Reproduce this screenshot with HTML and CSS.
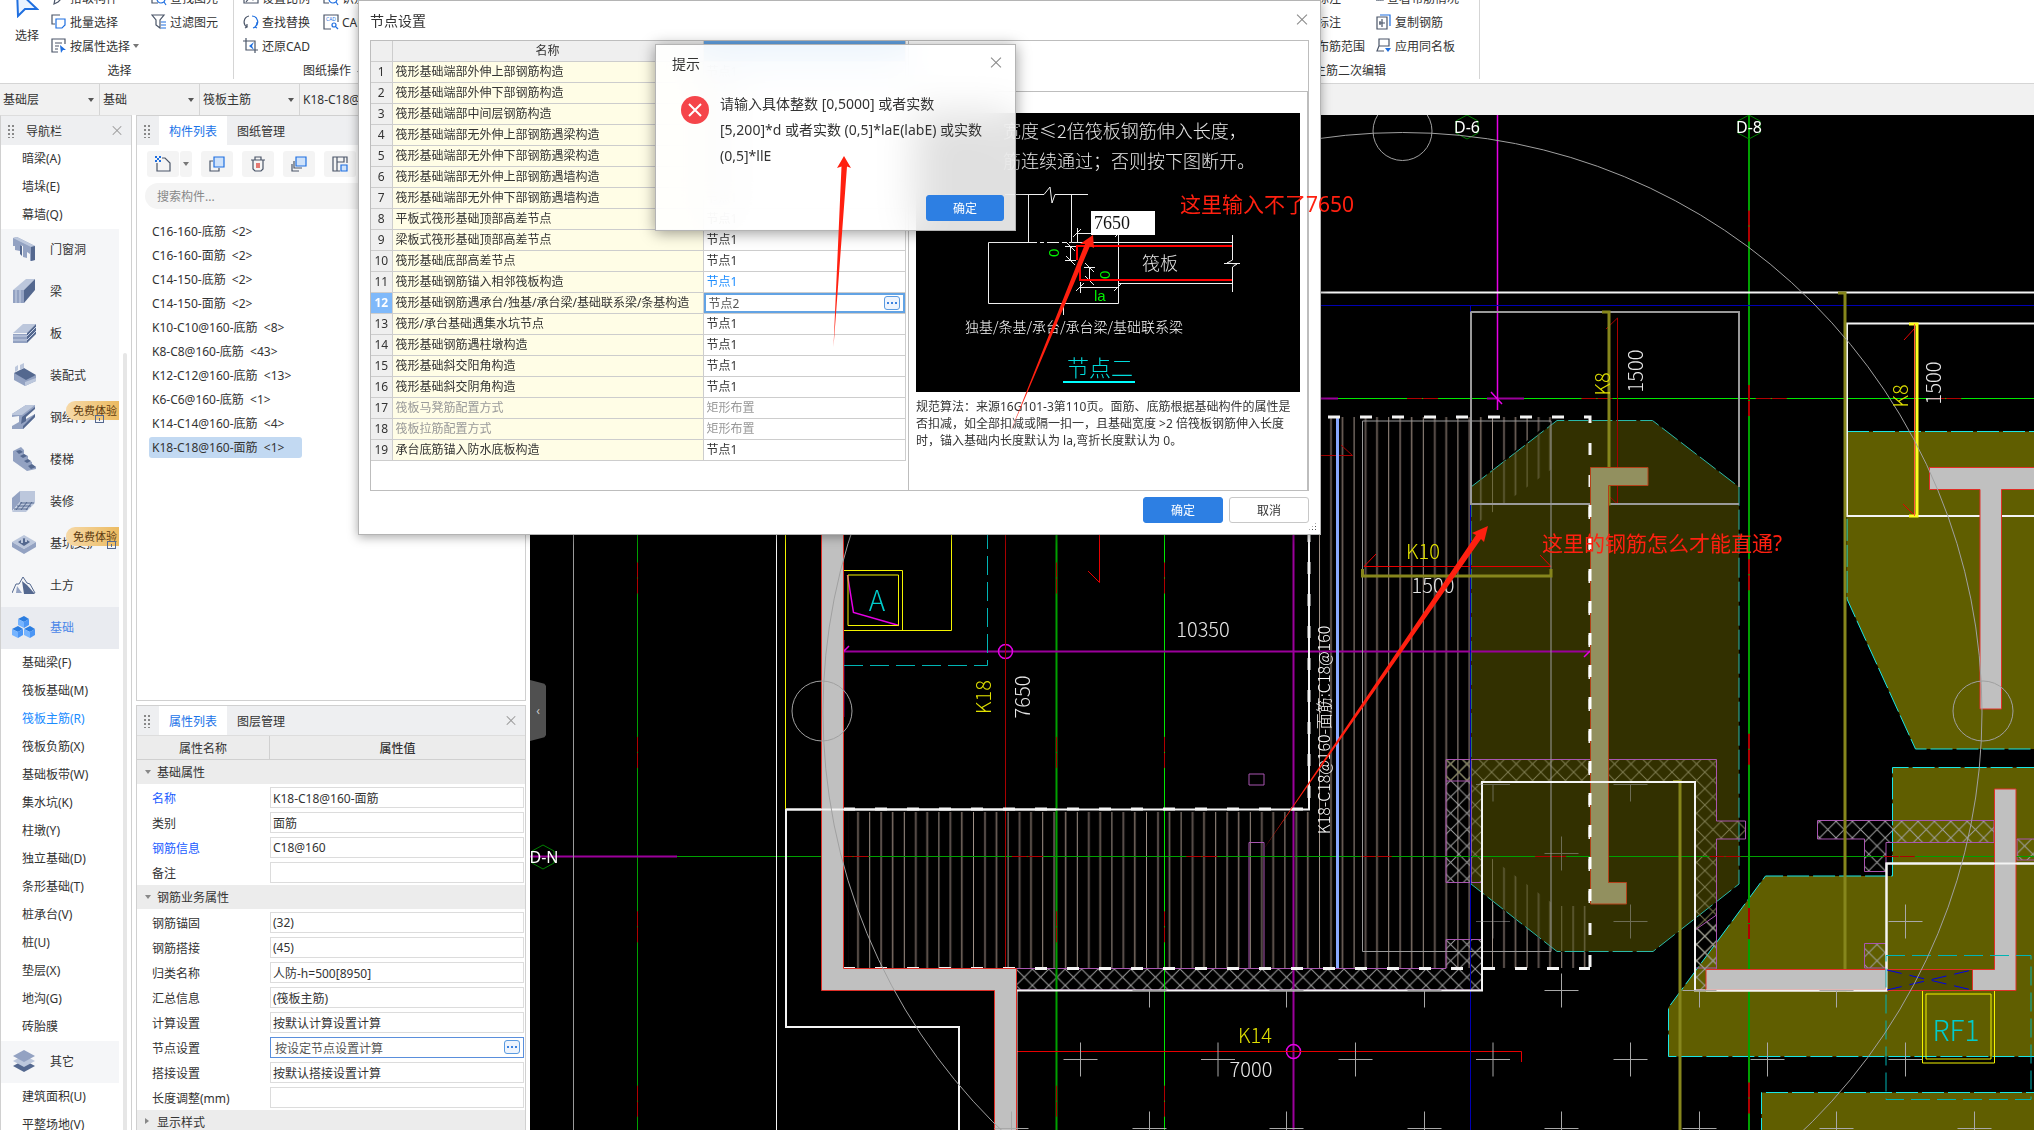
FILE: index.html
```html
<!DOCTYPE html>
<html lang="zh-CN">
<head>
    <meta charset="UTF-8">
    <title>节点设置</title>
    <link rel="stylesheet" href="styles.css">
</head>
<body>

    <!-- 功能区 -->
    <header class="ribbon">
        <div class="ribbon-group group-select">
            <button class="big-tool">
                <svg width="24" height="28" viewBox="0 0 24 28"><path d="M2 0 L3 26 L10 19 L22 19 Z" fill="#eaf3ff" stroke="#1f6fe0" stroke-width="2"/></svg>
                选择
            </button>
            <div class="tool-col">
                <button class="tool"><svg width="16" height="16" viewBox="0 0 16 16"><path d="M3 14 L4 9 L11 2 L14 5 L7 12 Z"/></svg>拾取构件</button>
                <button class="tool"><svg width="16" height="16" viewBox="0 0 16 16"><path d="M9 1H1V10H4"/><path class="b" d="M5 5H14V11L11 14H5Z"/></svg>批量选择</button>
                <button class="tool"><svg width="16" height="16" viewBox="0 0 16 16"><path d="M7 14H1V1H14V6M4 5H11M4 8H8M4 11H7"/><path class="bf" d="M9 7L15 12L12 12L10 15Z"/></svg>按属性选择<i class="caret"></i></button>
            </div>
            <div class="tool-col">
                <button class="tool"><svg width="16" height="16" viewBox="0 0 16 16"><path d="M1 3V13H7M4 5V10"/><circle class="b" cx="10" cy="9" r="4"/><path class="b" d="M13 12L15 15"/></svg>查找图元</button>
                <button class="tool"><svg width="16" height="16" viewBox="0 0 16 16"><path d="M1 1H13L9 6V14L5 11V6Z"/><path class="b" d="M10 8H15M10 11H15M10 14H15"/></svg>过滤图元</button>
            </div>
            <span class="group-name">选择</span>
        </div>
        <div class="ribbon-group group-drawing">
            <div class="tool-col">
                <button class="tool"><svg width="16" height="16" viewBox="0 0 16 16"><path d="M1 3H15V13H1ZM3 12L7 7L10 10L13 7"/></svg>设置比例</button>
                <button class="tool"><svg width="16" height="16" viewBox="0 0 16 16"><path d="M6 2A6 6 0 0 0 4 13L2 14M4 13V10"/><path class="b" d="M9 2A6 6 0 0 1 12 13L14 14M10 14A6 6 0 0 0 14 8"/></svg>查找替换</button>
                <button class="tool"><svg width="16" height="16" viewBox="0 0 16 16"><path d="M3 0V12H15M0 3H12V15"/><path class="bf" d="M11 4L6 8L11 12L9 8Z"/></svg>还原CAD</button>
            </div>
            <div class="tool-col">
                <button class="tool"><svg width="16" height="16" viewBox="0 0 16 16"><path d="M1 2V13H6"/><circle class="b" cx="10" cy="9" r="4"/><path class="b" d="M13 12L15 15"/></svg>识别</button>
                <button class="tool"><svg width="16" height="16" viewBox="0 0 16 16"><path d="M8 15H1V1H15V8"/><text x="3" y="7">CAD</text><circle class="b" cx="11" cy="11" r="2"/><path class="b" d="M13 13L15 15"/></svg>CAD</button>
            </div>
            <span class="group-name">图纸操作<i class="caret"></i></span>
        </div>
        <div class="ribbon-group group-edit">
            <div class="tool-col">
                <button class="tool">原位标注</button>
                <button class="tool">钢筋标注</button>
                <button class="tool">查看布筋范围</button>
            </div>
            <div class="tool-col">
                <button class="tool"><svg width="16" height="16" viewBox="0 0 16 16"><path d="M1 13L6 4M5 13L10 4M9 13L14 4M1 13H15V3H3Z"/></svg>查看布筋情况</button>
                <button class="tool"><svg width="16" height="16" viewBox="0 0 16 16"><path d="M1 3H11V15H1ZM6 5V13M3 9H9M4 7V11"/><path class="b" d="M4 1H14V12"/></svg>复制钢筋</button>
                <button class="tool"><svg width="16" height="16" viewBox="0 0 16 16"><path d="M3 1H13V8H3ZM3 4V8L1 13H8"/><path class="bf" d="M9 10H15L12 14Z"/></svg>应用同名板</button>
            </div>
            <span class="group-name">板主筋二次编辑</span>
        </div>
    </header>

    <!-- 楼层 / 构件 筛选 -->
    <div class="filter-bar">
        <label class="filter"><select aria-label="楼层"><option>基础层</option></select></label>
        <label class="filter"><select aria-label="构件大类"><option>基础</option></select></label>
        <label class="filter"><select aria-label="构件类型"><option>筏板主筋</option></select></label>
        <label class="filter"><select aria-label="构件"><option>K18-C18@160-面筋</option></select></label>
    </div>

    <main class="workspace">

        <!-- 导航栏 -->
        <nav class="nav-panel">
            <div class="panel-head">
                <span class="grip"></span>
                <span class="panel-title">导航栏</span>
                <button class="close" aria-label="关闭导航栏"></button>
            </div>
            <div class="nav-body">
                <div class="nav-list">
                    <a href="#" class="sub">暗梁(A)</a>
                    <a href="#" class="sub">墙垛(E)</a>
                    <a href="#" class="sub">幕墙(Q)</a>
                    <a href="#" class="cat"><svg viewBox="0 0 24 24"><path class="m" d="M1 1L5 0L23 9V23L18 24V17L15 15V21L11 20V9L8 8V14L3 13V9L1 9Z"/><path class="l" d="M1 1L5 0L23 9L19 10Z"/><path class="d" d="M19 10L23 9V23L19 24ZM8 8L10 9V19L8 17Z"/></svg>门窗洞</a>
                    <a href="#" class="cat"><svg viewBox="0 0 24 24"><path class="l" d="M1 11L14 0H23L12 11Z"/><path class="m" d="M1 11H12V24H1Z"/><path class="d" d="M12 11L23 0V11L12 24Z"/><path class="s" d="M4 11V24M8 11V24"/></svg>梁</a>
                    <a href="#" class="cat"><svg viewBox="0 0 24 24"><path class="l" d="M1 12L11 3H24L15 12Z"/><path class="m" d="M1 13H15V22H1Z"/><path class="d" d="M15 12L24 3V13L15 22Z"/><path class="s" d="M1 15H15L24 6M1 19H15L24 10"/></svg>板</a>
                    <a href="#" class="cat"><svg viewBox="0 0 24 24"><path class="m" d="M2 10L14 15L24 12V18L13 23L2 17Z"/><path class="d" d="M2 10L12 5L24 12L14 17Z"/><path class="l" d="M3 4L6 2V7L3 9ZM8 2L12 0V5L8 7ZM13 19L24 15V18L13 23Z"/></svg>装配式</a>
                    <a href="#" class="cat"><svg viewBox="0 0 24 24"><path class="m" d="M0 9L14 0H23V3L14 10V14L23 9V12L11 24H0V21L7 17V11L0 12Z"/><path class="l" d="M0 9L14 0H23L10 10H0Z"/><path class="d" d="M10 12L23 2V4L14 12V16L9 19ZM11 21L23 9V12L11 24Z"/></svg>钢结构<span class="badge">免费体验</span><i class="lock"></i></a>
                    <a href="#" class="cat"><svg viewBox="0 0 24 24"><path class="m" d="M1 4L9 0L12 3V7L16 9V13L20 15V18L24 20V22L15 24L1 14Z"/><path class="d" d="M4 4L8 3L11 5L7 7ZM8 9L12 7L15 9L11 11ZM12 14L16 12L19 14L15 16ZM16 19L20 17L24 20L19 22Z"/></svg>楼梯</a>
                    <a href="#" class="cat"><svg viewBox="0 0 24 24"><path class="m" d="M0 9L8 2V13L0 22Z"/><path class="l" d="M8 2H23V14L14 23H0L8 13Z"/><path class="k" d="M8 14H22M5 17H19M2 20H16M10 13L4 21M15 13L9 21M20 13L14 21"/></svg>装修</a>
                    <a href="#" class="cat"><svg viewBox="0 0 24 24"><path class="l" d="M0 11L12 4L24 11L12 18Z"/><path class="m" d="M0 11L12 18V23L0 16ZM12 18L24 11V16L12 23Z"/><path class="d" d="M6 11L12 7L18 11L12 15Z"/><path class="l" d="M9 8H11V12H9ZM13 8H15V11H13Z"/></svg>基坑支护<span class="badge">免费体验</span><i class="lock far"></i></a>
                    <a href="#" class="cat"><svg viewBox="0 0 24 24"><path class="k" d="M0 20L4 11L7 11L11 4L15 10L18 11L23 20"/><path class="d" d="M10 8L15 12L23 21H12Z"/><path class="m" d="M5 13L10 20H4Z"/></svg>土方</a>
                    <a href="#" class="cat current"><svg viewBox="0 0 24 24"><g id="cube"><path fill="#2b7de0" d="M6 4L12 1L17 4L12 7Z"/><path fill="#76b4ff" d="M6 4L12 7V13L6 10Z"/><path fill="#4b96f5" d="M12 7L17 4V10L12 13Z"/></g><use href="#cube" x="-6" y="10"/><use href="#cube" x="6" y="10"/></svg>基础</a>
                    <a href="#" class="sub">基础梁(F)</a>
                    <a href="#" class="sub">筏板基础(M)</a>
                    <a href="#" class="sub active">筏板主筋(R)</a>
                    <a href="#" class="sub">筏板负筋(X)</a>
                    <a href="#" class="sub">基础板带(W)</a>
                    <a href="#" class="sub">集水坑(K)</a>
                    <a href="#" class="sub">柱墩(Y)</a>
                    <a href="#" class="sub">独立基础(D)</a>
                    <a href="#" class="sub">条形基础(T)</a>
                    <a href="#" class="sub">桩承台(V)</a>
                    <a href="#" class="sub">桩(U)</a>
                    <a href="#" class="sub">垫层(X)</a>
                    <a href="#" class="sub">地沟(G)</a>
                    <a href="#" class="sub">砖胎膜</a>
                    <a href="#" class="cat"><svg viewBox="0 0 24 24"><path class="d" d="M1 17L12 11L23 17L12 23Z"/><path class="l" d="M1 12L12 6L23 12L12 18Z"/><path class="m" d="M1 7L12 1L23 7L12 13Z"/></svg>其它</a>
                    <a href="#" class="sub">建筑面积(U)</a>
                    <a href="#" class="sub">平整场地(V)</a>
                </div>
                <div class="nav-scroll"></div>
            </div>
        </nav>

        <div class="side">
            <!-- 构件列表 -->
            <section class="panel components">
                <div class="panel-head">
                    <span class="grip"></span>
                    <button class="tab active">构件列表</button>
                    <button class="tab">图纸管理</button>
                </div>
                <div class="tool-row">
                    <span class="split">
                        <button aria-label="新建"><svg width="18" height="18" viewBox="0 0 18 18"><path d="M8 3H11L16 8V16H3V8"/><path class="bf" d="M1 1h2v2h-2zM5 1h2v2h-2zM3 3h2v2h-2zM1 5h2v2h-2zM5 5h2v2h-2z"/></svg></button>
                        <button class="drop" aria-label="更多"><i class="caret"></i></button>
                    </span>
                    <button aria-label="复制"><svg width="18" height="18" viewBox="0 0 18 18"><path d="M5 6H2V16H11V13"/><path class="b fill" d="M6 2H16V12H6Z"/></svg></button>
                    <button aria-label="删除"><svg width="18" height="18" viewBox="0 0 18 18"><path d="M2 5H16M4 5V14L6 16H12L14 14V5M6 5V2H12V5"/><path class="r" d="M8 8V13M10 8V13"/></svg></button>
                    <button aria-label="层间复制"><svg width="18" height="18" viewBox="0 0 18 18"><path d="M4 6V13H12M2 9V16H9"/><path class="b fill" d="M6 2H16V11H6Z"/></svg></button>
                    <button aria-label="存档"><svg width="18" height="18" viewBox="0 0 18 18"><path d="M9 16H2V2H16V8M6 2V16M6 7H13V2"/><path class="b fill" d="M10 10H16V16H10Z"/></svg></button>
                </div>
                <input class="search" type="text" placeholder="搜索构件..." aria-label="搜索构件">
                <ul class="component-list">
                    <li>C16-160-底筋 &nbsp;&lt;2&gt;</li>
                    <li>C16-160-面筋 &nbsp;&lt;2&gt;</li>
                    <li>C14-150-底筋 &nbsp;&lt;2&gt;</li>
                    <li>C14-150-面筋 &nbsp;&lt;2&gt;</li>
                    <li>K10-C10@160-底筋 &nbsp;&lt;8&gt;</li>
                    <li>K8-C8@160-底筋 &nbsp;&lt;43&gt;</li>
                    <li>K12-C12@160-底筋 &nbsp;&lt;13&gt;</li>
                    <li>K6-C6@160-底筋 &nbsp;&lt;1&gt;</li>
                    <li>K14-C14@160-底筋 &nbsp;&lt;4&gt;</li>
                    <li class="selected">K18-C18@160-面筋 &nbsp;&lt;1&gt;</li>
                </ul>
            </section>

            <!-- 属性列表 -->
            <section class="panel props">
                <div class="panel-head">
                    <span class="grip"></span>
                    <button class="tab active">属性列表</button>
                    <button class="tab">图层管理</button>
                    <button class="close" aria-label="关闭属性列表"></button>
                </div>
                <div class="prop-head"><span>属性名称</span><strong>属性值</strong></div>
                <div class="prop-group">基础属性</div>
                <div class="prop key"><label for="p1">名称</label><input id="p1" value="K18-C18@160-面筋"></div>
                <div class="prop"><label for="p2">类别</label><input id="p2" value="面筋"></div>
                <div class="prop key"><label for="p3">钢筋信息</label><input id="p3" value="C18@160"></div>
                <div class="prop"><label for="p4">备注</label><input id="p4" value=""></div>
                <div class="prop-group">钢筋业务属性</div>
                <div class="prop"><label for="p5">钢筋锚固</label><input id="p5" value="(32)"></div>
                <div class="prop"><label for="p6">钢筋搭接</label><input id="p6" value="(45)"></div>
                <div class="prop"><label for="p7">归类名称</label><input id="p7" value="人防-h=500[8950]"></div>
                <div class="prop"><label for="p8">汇总信息</label><input id="p8" value="(筏板主筋)"></div>
                <div class="prop"><label for="p9">计算设置</label><input id="p9" value="按默认计算设置计算"></div>
                <div class="prop editing"><label for="p10">节点设置</label><input id="p10" value="按设定节点设置计算"><button class="dots" aria-label="选择节点设置"></button></div>
                <div class="prop"><label for="p11">搭接设置</label><input id="p11" value="按默认搭接设置计算"></div>
                <div class="prop"><label for="p12">长度调整(mm)</label><input id="p12" value=""></div>
                <div class="prop-group closed">显示样式</div>
            </section>
        </div>

        <!-- 绘图区 -->
        <section class="canvas">
            <svg class="cad" viewBox="530 115 1504 1015" preserveAspectRatio="xMinYMin slice">
                <defs>
                    <!-- 钢筋线 -->
                    <pattern id="bars" x="1319" y="0" width="34.6" height="40" patternUnits="userSpaceOnUse">
                        <rect x="0" width="1" height="40" fill="#a09288"/>
                        <rect x="11" width="2" height="40" fill="#5a504b"/>
                        <rect x="22.6" width="1.6" height="40" fill="#75685f"/>
                    </pattern>
                    <pattern id="barsDim" x="1319" y="0" width="34.6" height="40" patternUnits="userSpaceOnUse">
                        <rect x="0" width="1" height="40" fill="#6e6a40"/>
                        <rect x="11" width="2" height="40" fill="#57532c"/>
                        <rect x="22.6" width="1.6" height="40" fill="#625e38"/>
                    </pattern>
                    <!-- 剪力墙填充 -->
                    <pattern id="wall" x="1016" y="969" width="16.4" height="16.4" patternUnits="userSpaceOnUse">
                        <path d="M0 0L16.4 16.4M16.4 0L0 16.4" stroke="#a0a0a0" fill="none"/>
                    </pattern>
                    <pattern id="wallDim" x="1016" y="969" width="16.4" height="16.4" patternUnits="userSpaceOnUse">
                        <path d="M0 0L16.4 16.4M16.4 0L0 16.4" stroke="#7d7b50" fill="none"/>
                    </pattern>
                    <path id="plus" d="M-17 0H17M0 -17V17"/>
                    <path id="tick" d="M-17 0H17M0 0V17"/>
                    <path id="hex" d="M0 -12L11 -6V6L0 12L-11 6V-6Z"/>
                </defs>

                <!-- 承台 -->
                <g class="cap">
                    <path d="M1847 431.500H2040V749H1915.500L1847 599Z"/>
                    <path d="M1668.500 1056.500V1007.500L1765.500 876H1892.500V767.500H2040V1056.500Z"/>
                    <path d="M1761.500 1140V1092.500H2040V1140Z"/>
                </g>
                <path class="cap-dim" d="M1471 487L1557 420.500H1652.500L1739 487V884L1653 951.500H1557L1471 884Z"/>

                <!-- 筏板主筋 -->
                <path fill="url(#bars)" d="M848 812H1315V417H1471V968H848Z"/>
                <path fill="url(#bars)" d="M1471 417H1556L1471 487Z"/>
                <path fill="url(#barsDim)" d="M1471 487L1556 420V466L1476 524H1471Z"/>
                <path fill="url(#barsDim)" d="M1487 855L1556 906H1590V951H1557L1487 896Z"/>
                <path fill="url(#bars)" d="M1487 897L1557 952H1590V968H1487Z"/>

                <!-- 墙填充 -->
                <g class="wall">
                    <path fill="url(#wall)" d="M1016 968.500H1446V939.500H1482V990H1016Z"/>
                    <path fill="url(#wall)" d="M1471 759.500H1446V882.500H1471Z"/>
                    <path fill="url(#wallDim)" d="M1446 759.500H1716.500V821H1745.500V839H1716.500V968H1695V781.500H1482V882.500H1471V781H1446"/>
                    <path fill="url(#wall)" d="M1817.500 820.500H1994V842.500H1886V871.500H1864.500V839H1817.500Z"/>
                    <path fill="url(#wall)" d="M2017 839H2040V860H2017ZM1864.500 943.500H1886V968H1864.500ZM1695 930L1716.500 915V968L1706 990H1695Z"/>
                    <path d="M1249 774H1264V785H1249ZM1249 968V842.500H1264V968"/>
                </g>

                <!-- 轴线 -->
                <g class="axis">
                    <path d="M637.500 530V1130M657 856.500H821M844 856.500H2034"/>
                    <path d="M1056.500 530V1130M1749 115V1130" stroke-width="2"/>
                    <path class="bright" d="M1164.500 530V1130M1338 398.500H2034"/>
                </g>
                <g class="axis-red">
                    <path d="M637.500 562.500V1130M1056.500 562.500V1130M1164.500 562.500V1130"/>
                    <path d="M1749 210.500V1130" stroke-width="2"/>
                    <path d="M1407 398.500H2034M837.500 856.500H1990"/>
                </g>
                <g class="hexes"><use href="#hex" x="1467" y="127"/><use href="#hex" x="1749" y="127"/><use href="#hex" x="543" y="857"/></g>

                <!-- 尺寸线 -->
                <g class="purple">
                    <path d="M530 856.500H677M832 651.500H1590M1321 398.500H1338M1487 398.500H1524"/>
                    <path d="M1293.500 530V1130"/>
                    <path class="hot" d="M1497.500 115V410M1491 392L1502 404M843.500 640V717M838 657L849 646M1584 657L1590 651"/>
                    <circle cx="1005.500" cy="651.500" r="7"/>
                    <circle cx="1293.500" cy="1051.500" r="7"/>
                    <path class="hot" d="M847.500 575L853.500 612.500L899 625.500"/>
                </g>
                <g class="red">
                    <path d="M1005.500 530V968M1321 455.500H1352.500L1341 445M1617.500 318V504L1608 495M1617.500 318L1606 329"/>
                    <path class="hot" d="M1099.500 530V582.500L1088 571M1016 1051.500H1521.500V1062M1364 566.500H1551M1364 566.500L1376 554M1551 566.500L1540 555M1904 340L1915 328M1903 504L1915 516"/>
                </g>

                <!-- 蓝线 -->
                <g class="blue">
                    <path d="M1321 305.500H2034M1470.500 305V1130"/>
                    <path class="sel" d="M1337.500 417V968"/>
                </g>

                <!-- 灰线 -->
                <g class="gray">
                    <path d="M573.500 530V1130M1362.500 421V951.500H1551V421Z"/>
                    <path stroke-width="2" d="M1470.500 312H1739V487M1739 504H1471V312"/>
                </g>
                <g class="white">
                    <path stroke-width="1" d="M776.500 530V1130"/>
                    <path d="M1309 530V809.500H786V1027H959V1130"/>
                    <path d="M1321 292.500H2034M2040 323.500H1847V516H2040"/>
                    <path d="M1016.500 1130V990.500H1482V782H1695V990.500H1886.500V863.500H2040"/>
                    <path class="dash" d="M843 809H1309M1309 530V809M843 968.500H1590M1328 417H1590V968"/>
                </g>

                <!-- 黄线 -->
                <g class="yellow">
                    <path d="M785.500 530V809M843.500 570.500H902.500V630M848 575H898.500V625.500H848ZM951.500 530V630.500H843.500"/>
                    <path d="M1922.500 991V1063H1994.500V991M1926 994H1991V1059H1926Z"/>
                    <path class="bar" d="M1602 312H1609V504H1602M1838 293H1845V990H1838M1362.500 569V576H1551V569M1673 781.500H1680V1130"/>
                    <path class="hot" d="M1909 324H1917V516H1909"/>
                </g>
                <path d="M1914.500 324V516" stroke="#ff5a3c"/>

                <!-- 柱 墙 -->
                <g class="solid">
                    <path d="M821.500 520H843.500V968.500H1016.500V1140H994.500V990.500H821.500Z"/>
                    <path d="M1929.500 467.500H2040V489.500H2001.500V709H1980V489.500H1929.500Z"/>
                    <path d="M1706 969.500H1886V990H1706ZM1972.500 969.500H1994.500V789H2016V990.500H1972.500Z"/>
                    <path class="dim" d="M1590.500 467.500H1648V485.500H1608.500V882.500H1626.500V904H1590.500Z"/>
                    <path class="door" d="M1886 969.500H1972.500V990.500H1886Z"/>
                </g>
                <path class="white-line" d="M786 809.500H1056M1706 990.500H1886.500V863.500H2040M1482 782H1695"/>
                <path d="M1590 505V904" stroke="#fff" stroke-width="3" stroke-dasharray="12 20"/>
                <path d="M1887 970L1972 990M1887 990L1972 970" stroke="#0000e6" stroke-dasharray="15 8"/>
                <g class="cyan">
                    <path d="M987.500 530V665.500H843.500"/>
                    <path d="M1886 955.500H2031V1099.500H1886Z"/>
                </g>

                <!-- 十字 -->
                <g class="marks">
                    <use href="#plus" x="1080.500" y="1059.500"/><use href="#plus" x="1218" y="1059.500"/><use href="#plus" x="1355.500" y="1059.500"/><use href="#plus" x="1493" y="1059.500"/><use href="#plus" x="1630.500" y="1059.500"/><use href="#plus" x="1767.500" y="1059.500"/><use href="#plus" x="1905.500" y="1059.500"/>
                    <use href="#plus" x="1011.500" y="1128.500"/><use href="#plus" x="1149.500" y="1128.500"/><use href="#plus" x="1286.500" y="1128.500"/><use href="#plus" x="1424.500" y="1128.500"/><use href="#plus" x="1561.500" y="1128.500"/><use href="#plus" x="1699.500" y="1128.500"/><use href="#plus" x="1836.500" y="1128.500"/><use href="#plus" x="1974.500" y="1128.500"/>
                    <use href="#tick" x="1149.500" y="990.500"/><use href="#tick" x="1286.500" y="990.500"/><use href="#tick" x="1424.500" y="990.500"/><use href="#plus" x="1561.500" y="990.500"/><use href="#tick" x="1699.500" y="990.500"/><use href="#tick" x="1836.500" y="990.500"/>
                    <use href="#plus" x="1905.500" y="921.500"/>
                    <g opacity="0.5"><use href="#plus" x="1493" y="921.500"/><use href="#plus" x="1630.500" y="921.500"/><use href="#plus" x="1561.500" y="853.500"/><use href="#tick" x="1493" y="784.500"/><use href="#tick" x="1630.500" y="784.500"/></g>
                </g>

                <!-- 圆 -->
                <g class="circles">
                    <circle cx="1402.500" cy="712" r="579.500"/>
                    <circle cx="1402.500" cy="131" r="29.500"/>
                    <circle cx="822" cy="711" r="30"/>
                    <circle cx="1983" cy="711" r="30"/>
                </g>

                <!-- 标注文字 -->
                <g class="cad-text">
                    <text x="1467" y="133" class="ax">D-6</text>
                    <text x="1749" y="133" class="ax">D-8</text>
                    <text x="544" y="863" class="ax">D-N</text>
                    <text x="1203" y="637">10350</text>
                    <text x="1433" y="593">1500</text>
                    <text x="1251" y="1077">7000</text>
                    <text transform="translate(1030 697) rotate(-90)">7650</text>
                    <text transform="translate(1643 371) rotate(-90)">1500</text>
                    <text transform="translate(1941 383) rotate(-90)">1500</text>
                    <text class="code" x="1423" y="559">K10</text>
                    <text class="code" x="1255" y="1043">K14</text>
                    <text class="code" transform="translate(991 697) rotate(-90)">K18</text>
                    <text class="code" transform="translate(1610 384) rotate(-90)">K8</text>
                    <text class="code" transform="translate(1908 396) rotate(-90)">K8</text>
                    <text class="tag" x="877" y="611">A</text>
                    <text class="tag" x="1956" y="1041">RF1</text>
                    <text class="bar-name" transform="translate(1330 730) rotate(-90)">K18-C18@160-面筋:C18@160</text>
                </g>
            </svg>
            <button class="collapse" aria-label="收起侧栏">‹</button>
        </section>
    </main>

    <!-- 节点设置窗口 -->
    <div class="dialog" role="dialog" aria-label="节点设置">
        <div class="dialog-head">
            <h2>节点设置</h2>
            <button class="close big" aria-label="关闭"></button>
        </div>
        <div class="dialog-body">
            <div class="node-table">
                <table>
                    <colgroup><col class="c-no"><col class="c-name"><col class="c-val"></colgroup>
                    <thead><tr><th></th><th>名称</th><th class="sel"></th></tr></thead>
                    <tbody>
                        <tr><th>1</th><td>筏形基础端部外伸上部钢筋构造</td><td>节点1</td></tr>
                        <tr><th>2</th><td>筏形基础端部外伸下部钢筋构造</td><td>节点1</td></tr>
                        <tr><th>3</th><td>筏形基础端部中间层钢筋构造</td><td>节点1</td></tr>
                        <tr><th>4</th><td>筏形基础端部无外伸上部钢筋遇梁构造</td><td>节点1</td></tr>
                        <tr><th>5</th><td>筏形基础端部无外伸下部钢筋遇梁构造</td><td>节点1</td></tr>
                        <tr><th>6</th><td>筏形基础端部无外伸上部钢筋遇墙构造</td><td>节点1</td></tr>
                        <tr><th>7</th><td>筏形基础端部无外伸下部钢筋遇墙构造</td><td>节点1</td></tr>
                        <tr><th>8</th><td>平板式筏形基础顶部高差节点</td><td>节点1</td></tr>
                        <tr><th>9</th><td>梁板式筏形基础顶部高差节点</td><td>节点1</td></tr>
                        <tr><th>10</th><td>筏形基础底部高差节点</td><td>节点1</td></tr>
                        <tr><th>11</th><td>筏形基础钢筋锚入相邻筏板构造</td><td class="changed">节点1</td></tr>
                        <tr class="current"><th>12</th><td>筏形基础钢筋遇承台/独基/承台梁/基础联系梁/条基构造</td><td class="edit"><div class="cell"><input value="节点2" aria-label="节点"><button class="dots" aria-label="选择节点"></button></div></td></tr>
                        <tr><th>13</th><td>筏形/承台基础遇集水坑节点</td><td>节点1</td></tr>
                        <tr><th>14</th><td>筏形基础钢筋遇柱墩构造</td><td>节点1</td></tr>
                        <tr><th>15</th><td>筏形基础斜交阳角构造</td><td>节点1</td></tr>
                        <tr><th>16</th><td>筏形基础斜交阴角构造</td><td>节点1</td></tr>
                        <tr class="off"><th>17</th><td>筏板马凳筋配置方式</td><td>矩形布置</td></tr>
                        <tr class="off"><th>18</th><td>筏板拉筋配置方式</td><td>矩形布置</td></tr>
                        <tr><th>19</th><td>承台底筋锚入防水底板构造</td><td>节点1</td></tr>
                    </tbody>
                </table>
            </div>
            <div class="node-side">
                <div class="node-top"></div>
                <div class="node-view">
                    <div class="figure">
                        <svg width="384" height="279" viewBox="916 113 384 279">
                            <g class="note">
                                <text x="1003" y="138">宽度≤2倍筏板钢筋伸入长度，</text>
                                <text x="1003" y="168">筋连续通过；否则按下图断开。</text>
                                <text x="1142" y="270">筏板</text>
                            </g>
                            <g class="lines">
                                <path d="M1005 194.500H1044L1050 187L1052 203L1055 194.500H1088"/>
                                <path d="M1028.500 194.500V242.500M1071.500 194.500V242.500H1232"/>
                                <path d="M1037 242.500H988.500V303.500H1118.500V235"/>
                                <path d="M1040 242.500H1071" stroke-dasharray="4 3 12 3"/>
                                <path d="M1232.500 235V260L1227 263L1237 264L1232.500 267V292M1118.500 283.500H1232M1224 263.500H1240"/>
                                <path d="M1077.500 228V242M1073 237L1081 229M1077 233.500H1119M1115 237L1123 229"/>
                                <path d="M1070.500 246V260M1065 246.500H1076M1065 260.500H1076M1066 242L1075 251M1066 256L1075 265"/>
                                <path d="M1089.500 267V281M1084 267.500H1095M1084 280.500H1095M1085 263L1094 272M1085 276L1094 285"/>
                                <path d="M1080.500 282V293M1076 291L1084 283M1080 287.500H1118M1114 291L1122 283M1063.500 300V315"/>
                            </g>
                            <path class="rebar" d="M1232 246H1077V260M1232 280H1080V265"/>
                            <g class="dims">
                                <text transform="translate(1059 257) rotate(-90)">0</text>
                                <text transform="translate(1110 279) rotate(-90)">0</text>
                                <text x="1094" y="301">la</text>
                            </g>
                            <text class="kind" x="965" y="332">独基/条基/承台/承台梁/基础联系梁</text>
                            <text class="node-name" x="1067" y="376">节点二</text>
                            <path d="M1063 382H1135" stroke="#00ffff" stroke-width="2"/>
                        </svg>
                        <input class="dim-input" value="7650" aria-label="弯折长度">
                    </div>
                    <p class="rule">规范算法：来源16G101-3第110页。面筋、底筋根据基础构件的属性是否扣减，如全部扣减或隔一扣一，且基础宽度 &gt;2 倍筏板钢筋伸入长度时，锚入基础内长度默认为 la,弯折长度默认为 0。</p>
                </div>
            </div>
        </div>
        <div class="dialog-foot">
            <button class="btn primary">确定</button>
            <button class="btn">取消</button>
            <i class="resize"></i>
        </div>
    </div>

    <!-- 提示 -->
    <div class="alert" role="alertdialog" aria-label="提示">
        <div class="alert-head">
            <h2>提示</h2>
            <button class="close big" aria-label="关闭"></button>
        </div>
        <div class="alert-body">
            <svg width="28" height="28" viewBox="0 0 28 28"><circle cx="14" cy="14" r="14" fill="#f5454a"/><path d="M8 8L20 20M20 8L8 20" stroke="#fff" stroke-width="2"/></svg>
            <p>请输入具体整数 [0,5000] 或者实数<br>[5,200]*d 或者实数 (0,5]*laE(labE) 或实数<br>(0,5]*llE</p>
        </div>
        <div class="alert-foot"><button class="btn primary">确定</button></div>
    </div>

    <!-- 批注 -->
    <svg class="marker" viewBox="0 0 2034 1130" preserveAspectRatio="xMinYMin slice">
        <path d="M844 156L851 168L847 166.500L833.500 347L841.500 166.500L837 168Z"/>
        <path d="M1093 235L1094 248L1090 246L1010 433L1085 244L1080 244Z"/>
        <path d="M1488 526L1484 542L1481 539L1263 850L1476 535L1472 533Z"/>
        <text x="1180" y="212">这里输入不了7650</text>
        <text x="1542" y="551">这里的钢筋怎么才能直通?</text>
    </svg>

</body>
</html>
```
FILE: styles.css
```css
* {
    box-sizing: border-box;
    margin: 0;
    padding: 0;
}

body {
    font-family: "Noto Sans", "Noto Sans CJK SC", sans-serif;
    font-size: 12px;
    color: #333;
    background-color: #fff;
    display: flex;
    flex-direction: column;
    height: 100vh;
    overflow: hidden;
    position: relative;
}

button,
input,
select {
    font: inherit;
    color: inherit;
    border: none;
    background: none;
    outline: none;
}

a {
    color: inherit;
    text-decoration: none;
}

.caret {
    display: inline-block;
    border: 3px solid transparent;
    border-top: 4px solid #777;
    border-bottom: none;
}

/* 功能区 */
.ribbon {
    height: 84px;
    flex: none;
    display: flex;
    border-bottom: 1px solid #d5d5d5;
    overflow: hidden;
}

.ribbon-group {
    position: relative;
    display: flex;
    height: 79px;
    border-right: 1px solid #d5d5d5;
    flex: none;
}

.group-select {
    width: 234px;
    padding-left: 14px;
}

.group-drawing {
    width: 1036px;
    padding-left: 8px;
    border-right: none;
}

.group-edit {
    width: 210px;
    padding-left: 23px;
}

.group-name {
    position: absolute;
    left: 0;
    right: 0;
    bottom: 0;
    line-height: 16px;
    text-align: center;
}

.group-select .group-name {
    padding-left: 6px;
}

.group-drawing .group-name {
    right: auto;
    left: 69px;
}

.group-edit .group-name {
    right: auto;
    left: 32px;
}

.group-name .caret {
    margin-left: 6px;
}

.big-tool {
    display: flex;
    flex-direction: column;
    align-items: center;
    width: 28px;
    margin-top: -10px;
    height: 56px;
    gap: 9px;
    line-height: 18px;
}

.tool-col {
    display: flex;
    flex-direction: column;
    margin-top: -14px;
    margin-left: 11px;
    width: 88px;
    white-space: nowrap;
}

.group-select .tool-col + .tool-col {
    margin-left: 12px;
}

.group-drawing .tool-col {
    margin-left: 1px;
    width: 80px;
}

.group-drawing .tool-col + .tool-col {
    margin-left: 0;
}

.group-edit .tool-col {
    margin-left: 0;
    width: 83px;
}

.tool {
    display: flex;
    align-items: center;
    gap: 3px;
    height: 24px;
}

.tool svg,
.tool-row svg {
    fill: none;
    stroke: #4a5568;
    stroke-width: 1.2;
}

.tool svg text {
    font-size: 5px;
    fill: #1f6fe0;
    stroke: none;
}

.b {
    stroke: #1f6fe0;
}

.bf {
    fill: #1f6fe0;
    stroke: none;
}

.b.fill {
    fill: #cfe2fa;
}

.r {
    stroke: #d9261c;
}

/* 筛选栏 */
.filter-bar {
    height: 31px;
    flex: none;
    display: flex;
    background-color: #f1f1f1;
}

.filter {
    position: relative;
    width: 100px;
    border-right: 1px solid #d5d5d5;
}

.filter::after {
    content: "";
    position: absolute;
    right: 5px;
    top: 14px;
    border: 3px solid transparent;
    border-top: 4px solid #555;
    border-bottom: none;
}

.filter select {
    appearance: none;
    width: 100%;
    height: 100%;
    padding-left: 3px;
}

/* 主区域 */
.workspace {
    flex: 1;
    min-height: 0;
    display: flex;
}

.panel-head {
    display: flex;
    align-items: center;
    height: 29px;
    flex: none;
    background-color: #eeeff1;
    padding-left: 6px;
}

.grip {
    width: 7px;
    height: 14px;
    background-image: radial-gradient(circle, #888 1px, transparent 1px);
    background-size: 4px 4px;
}

.close {
    position: relative;
    margin-left: auto;
    margin-right: 8px;
    width: 12px;
    height: 12px;
}

.close::before,
.close::after {
    content: "";
    position: absolute;
    left: 0;
    top: 5px;
    width: 12px;
    height: 1px;
    background-color: #999;
    transform: rotate(45deg);
}

.close::after {
    transform: rotate(-45deg);
}

.close.big::before,
.close.big::after {
    left: -1px;
    width: 14px;
    background-color: #888;
}

.nav-panel {
    width: 132px;
    flex: none;
    display: flex;
    flex-direction: column;
    border: 1px solid #d0d0d0;
    border-top-color: #ddd;
    border-bottom: none;
    margin-right: 4px;
    overflow: hidden;
}

.panel-title {
    margin-left: 12px;
}

.nav-body {
    flex: 1;
    min-height: 0;
    display: flex;
}

.nav-list {
    width: 118px;
    overflow: hidden;
}

.nav-scroll {
    width: 4px;
    margin-left: 4px;
    margin-top: 208px;
    background-color: #e6e6e6;
    border-radius: 2px 2px 0 0;
}

.sub {
    display: block;
    height: 28px;
    line-height: 28px;
    padding-left: 21px;
}

.sub.active {
    color: #1a8cff;
}

.cat {
    position: relative;
    display: flex;
    align-items: center;
    gap: 14px;
    height: 42px;
    padding-left: 11px;
    padding-bottom: 2px;
    background-color: #f5f6f8;
    white-space: nowrap;
}

.cat.current {
    background-color: #e9ebf0;
    color: #4a86e8;
}

.cat svg {
    width: 24px;
    height: 24px;
    flex: none;
}

.cat .l { fill: #bcc7dc; }
.cat .m { fill: #93a2c2; }
.cat .d { fill: #54688f; }
.cat .s { fill: none; stroke: #c9d3e6; }
.cat .k { fill: none; stroke: #54688f; }

.badge {
    position: absolute;
    right: 0;
    top: 4px;
    height: 19px;
    line-height: 19px;
    padding: 0 2px 0 7px;
    font-size: 11px;
    color: #5c3a10;
    background: linear-gradient(90deg, #f6d9a8, #ecbb62);
    border-radius: 9px 0 0 9px;
}

.lock {
    position: absolute;
    left: 94px;
    top: 18px;
    width: 9px;
    height: 8px;
    border: 1px solid #54688f;
}

.lock::after {
    content: "";
    position: absolute;
    left: 3px;
    top: 2px;
    width: 1px;
    height: 3px;
    background-color: #54688f;
}

.lock.far {
    left: 106px;
}

.side {
    width: 390px;
    flex: none;
    display: flex;
    flex-direction: column;
    gap: 4px;
    margin-right: 4px;
}

.panel {
    border: 1px solid #d0d0d0;
    display: flex;
    flex-direction: column;
}

.components {
    height: 586px;
    flex: none;
}

.props {
    flex: 1;
    min-height: 0;
    border-bottom: none;
    overflow: hidden;
}

.panel .grip {
    margin-right: 9px;
}

.tab {
    height: 29px;
    padding: 0 10px;
}

.tab.active {
    background-color: #fff;
    color: #1a73e8;
}

.tool-row {
    display: flex;
    gap: 9px;
    padding: 6px 10px;
}

.tool-row button {
    width: 32px;
    height: 26px;
    display: flex;
    align-items: center;
    justify-content: center;
    background-color: #f4f4f4;
    border-radius: 3px;
}

.split {
    display: flex;
    gap: 1px;
}

.tool-row .drop {
    width: 12px;
}

.search {
    margin-left: 8px;
    height: 26px;
    flex: none;
    padding-left: 12px;
    border-radius: 13px;
    background-color: #f4f4f4;
}

.search::placeholder {
    color: #888;
}

.component-list {
    list-style: none;
    padding: 12px;
    display: flex;
    flex-direction: column;
    align-items: flex-start;
    gap: 3px;
}

.component-list li {
    height: 21px;
    line-height: 21px;
    padding: 0 18px 0 3px;
    border-radius: 3px;
}

.component-list .selected {
    background-color: #c2d9f2;
}

/* 属性 */
.prop-head {
    display: flex;
    height: 25px;
    flex: none;
    line-height: 25px;
    text-align: center;
    background-color: #ececec;
    border-top: 1px solid #ddd;
    border-bottom: 1px solid #d0d0d0;
}

.prop-head span {
    width: 133px;
    border-right: 1px solid #d0d0d0;
}

.prop-head strong {
    flex: 1;
    font-weight: 500;
}

.prop-group {
    position: relative;
    height: 25px;
    flex: none;
    line-height: 26px;
    padding-left: 20px;
    background-color: #ececec;
    border-bottom: 1px solid #fff;
}

.prop-group::before {
    content: "";
    position: absolute;
    left: 8px;
    top: 10px;
    border: 3px solid transparent;
    border-top: 4px solid #888;
    border-bottom: none;
}

.prop-group.closed::before {
    top: 8px;
    border: 3px solid transparent;
    border-left: 4px solid #888;
    border-right: none;
}

.prop {
    position: relative;
    display: flex;
    align-items: center;
    height: 25px;
    flex: none;
    padding-right: 1px;
}

.prop label {
    width: 133px;
    padding-left: 15px;
}

.prop input {
    flex: 1;
    min-width: 0;
    height: 21px;
    padding-left: 2px;
    border: 1px solid #dcdcdc;
}

.prop.key label {
    color: #1a5cff;
}

.prop.editing input {
    border-color: #5a8fdc;
    padding-left: 4px;
    color: #555;
}

.dots {
    position: absolute;
    right: 5px;
    top: 5px;
    width: 16px;
    height: 14px;
    border: 1px solid #5a9ae0;
    border-radius: 3px;
    background: radial-gradient(circle, #3c82e0 1px, transparent 1px) center / 4px 4px no-repeat, #eef4fd;
    background-repeat: repeat-x;
    background-clip: content-box, border-box;
    padding: 0 1px;
}

/* 绘图区 */
.canvas {
    position: relative;
    flex: 1;
    min-width: 0;
    background-color: #000;
    overflow: hidden;
}

.cad {
    display: block;
    width: 100%;
    height: 100%;
    fill: none;
}

.cad .cap { fill: #605e00; stroke: #19e6e6; stroke-dasharray: 22 4; }
.cad .cap-dim { fill: #323000; stroke: #2ab8a8; stroke-dasharray: 20 4; }
.cad .wall { stroke: #a855b0; }
.cad .axis { stroke: #00a000; }
.cad .axis .bright { stroke: #00e800; }
.cad .axis-red { stroke: #b00000; stroke-dasharray: 15 1 15 143.400; }
.cad .hexes { stroke: #008000; }
.cad .purple { stroke: #9b009b; stroke-width: 2; }
.cad .purple .hot,
.cad .purple circle { stroke: #e600e6; stroke-width: 1.500; }
.cad .red { stroke: #a80000; }
.cad .red .hot { stroke: #e80000; }
.cad .blue { stroke: #0000b4; }
.cad .blue .sel { stroke: #88a8ff; stroke-width: 3; }
.cad .gray { stroke: #9a9a9a; }
.cad .white,
.cad .white-line { stroke: #f4f4f4; stroke-width: 2; }
.cad .white .dash { stroke-width: 3; stroke-dasharray: 12 20; }
.cad .yellow { stroke: #f4f400; }
.cad .yellow .bar { stroke: #86861c; stroke-width: 3; }
.cad .yellow .hot { stroke: #ffff20; stroke-width: 3; }
.cad .solid { fill: #c0c0c0; stroke: #e03028; }
.cad .solid .dim { fill: #92905f; stroke: #b44018; }
.cad .solid .door { fill: #504c00; }
.cad .cyan { stroke: #00b4b4; stroke-width: 1; stroke-dasharray: 19 7; }
.cad .marks { stroke: #a8a8a8; }
.cad .circles { stroke: #a0a0a0; }

.cad-text {
    fill: #e6e6e6;
    font-family: "Noto Sans CJK SC", sans-serif;
    font-size: 20px;
    font-weight: 300;
    text-anchor: middle;
}

.cad-text .ax {
    font-family: "Noto Sans", sans-serif;
    font-size: 16px;
    font-weight: 400;
    fill: #fff;
}

.cad-text .code {
    fill: #e0e000;
}

.cad-text .tag {
    fill: #00cccc;
    font-size: 28px;
}

.cad-text .bar-name {
    font-size: 16px;
    fill: #fff;
}

.collapse {
    position: absolute;
    left: 0;
    top: 565px;
    width: 16px;
    height: 61px;
    background-color: #505050;
    color: #ccc;
    clip-path: polygon(0 0, 90% 6%, 100% 10%, 100% 90%, 90% 94%, 0 100%);
}

/* 节点设置 */
.dialog {
    position: absolute;
    left: 358px;
    top: 0;
    width: 963px;
    background-color: #fff;
    border: 1px solid #b4b4b4;
    box-shadow: 0 2px 10px rgba(0, 0, 0, 0.35);
    padding: 0 11px;
}

h2 {
    font-size: 14px;
    font-weight: 400;
}

.dialog-head {
    display: flex;
    align-items: center;
    height: 39px;
    padding-bottom: 1px;
}

.dialog-head .close {
    margin-right: 1px;
}

.dialog-body {
    display: flex;
    height: 451px;
    border: 1px solid #bdbdbd;
}

.node-table {
    width: 538px;
    border-right: 1px solid #bdbdbd;
}

table {
    width: 534px;
    table-layout: fixed;
    border-collapse: collapse;
}

.c-no { width: 21px; }
.c-name { width: 311px; }
.c-val { width: 202px; }

tr {
    height: 21px;
}

thead tr {
    height: 20px;
}

th,
td {
    line-height: 18px;
    border: 1px solid #cdcdcd;
    border-top: none;
    font-weight: 400;
    white-space: nowrap;
    overflow: hidden;
}

th {
    background-color: #efefef;
    text-align: center;
}

th:first-child {
    border-left: none;
}

th.sel {
    background-color: #62a3e4;
}

td {
    padding-left: 3px;
}

td:nth-child(2) {
    background-color: #fffde6;
}

.changed {
    color: #1a8cff;
}

.off td {
    color: #999;
}

.current th {
    background-color: #7fb9fa;
    color: #fff;
    font-weight: 700;
}

.edit {
    padding: 0;
}

.cell {
    position: relative;
    height: 20px;
}

.cell input {
    display: block;
    width: 100%;
    height: 20px;
    border: 2px solid #62a3e4;
    padding-left: 3px;
    color: #555;
}

.cell .dots {
    top: 3px;
}

.node-side {
    flex: 1;
    display: flex;
    flex-direction: column;
}

.node-top {
    height: 50px;
}

.node-view {
    flex: 1;
    border-top: 1px solid #bdbdbd;
    border-right: 1px solid #bdbdbd;
    padding: 21px 6px 0 7px;
}

.figure {
    position: relative;
    width: 384px;
    height: 279px;
    background-color: #000;
}

.figure svg {
    display: block;
    fill: none;
}

.figure .lines { stroke: #f0f0f0; }
.figure .rebar { stroke: #f00; stroke-width: 2; }

.note {
    fill: #e6e6e6;
    font-family: "Noto Sans CJK SC", sans-serif;
    font-size: 18px;
    font-weight: 300;
}

.dims {
    fill: #00f000;
    font-family: "Liberation Sans", sans-serif;
    font-size: 15px;
}

.kind {
    fill: #fff;
    font-family: "Noto Sans CJK SC", sans-serif;
    font-size: 14px;
    font-weight: 300;
}

.node-name {
    fill: #00dcdc;
    font-family: "Noto Sans CJK SC", sans-serif;
    font-size: 22px;
    font-weight: 300;
}

.dim-input {
    position: absolute;
    left: 175px;
    top: 98px;
    width: 64px;
    height: 24px;
    padding-left: 3px;
    background-color: #fff;
    color: #111;
    font-family: "Liberation Serif", serif;
    font-size: 18px;
}

.rule {
    margin-top: 6px;
    line-height: 17px;
}

.dialog-foot {
    display: flex;
    justify-content: flex-end;
    align-items: flex-start;
    gap: 6px;
    padding-top: 6px;
    height: 43px;
}

.btn {
    width: 80px;
    height: 26px;
    border: 1px solid #c8c8c8;
    border-radius: 3px;
    background-color: #fff;
}

.btn.primary {
    background-color: #2d7fe3;
    border-color: #2d7fe3;
    color: #fff;
}

.resize {
    position: absolute;
    right: 3px;
    bottom: 3px;
    width: 9px;
    height: 9px;
    background-image: linear-gradient(#777, #777);
    background-image: radial-gradient(circle, #555 1px, transparent 1px);
    background-size: 3px 3px;
    clip-path: polygon(100% 0, 100% 100%, 0 100%);
}

/* 提示 */
.alert {
    position: absolute;
    left: 655px;
    top: 44px;
    width: 361px;
    height: 187px;
    padding: 0 11px 9px 16px;
    display: flex;
    flex-direction: column;
    background-color: rgba(255, 255, 255, 0.88);
    backdrop-filter: blur(20px);
    border: 1px solid #b4b4b4;
    box-shadow: 0 2px 14px rgba(0, 0, 0, 0.4);
}

.alert-head {
    display: flex;
    align-items: center;
    height: 38px;
    padding-bottom: 2px;
}

.alert-head .close {
    margin-right: 2px;
}

.alert-body {
    flex: 1;
    display: flex;
    gap: 11px;
    padding: 8px 0 0 9px;
    font-size: 14px;
    line-height: 26px;
}

.alert-body svg {
    flex: none;
    margin-top: 5px;
}

.alert-body p {
    white-space: nowrap;
}

.alert-foot {
    display: flex;
    justify-content: flex-end;
}

.alert-foot .btn {
    width: 78px;
}

/* 批注 */
.marker {
    position: absolute;
    left: 0;
    top: 0;
    width: 100%;
    height: 100%;
    fill: #ff2010;
    font-size: 21px;
    pointer-events: none;
}
```
